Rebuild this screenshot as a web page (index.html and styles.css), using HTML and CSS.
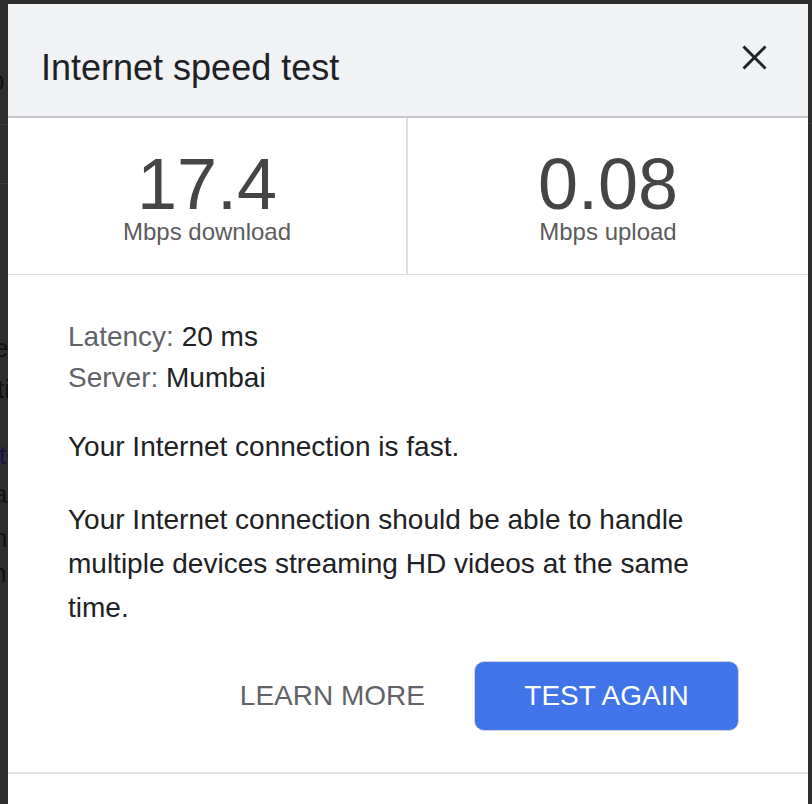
FILE: index.html
```html
<!DOCTYPE html>
<html lang="en">
<head>
<meta charset="utf-8">
<title>Internet speed test</title>
<link rel="stylesheet" href="styles.css">
</head>
<body>
<div class="screen">
  <div class="backdrop">
    <div class="bg-line bg-p">p</div>
    <div class="bg-rule bg-rule-1"></div>
    <div class="bg-rule bg-rule-2"></div>
    <div class="bg-line bg-e">ed</div>
    <div class="bg-line bg-ti">tion</div>
    <div class="bg-line bg-t link">test</div>
    <div class="bg-line bg-a">an</div>
    <div class="bg-line bg-n1">nd</div>
    <div class="bg-line bg-n2">ni</div>
  </div>

  <div class="dialog">
    <div class="header">
      <h1 class="title">Internet speed test</h1>
      <svg class="close" viewBox="0 0 27 27" aria-label="Close">
        <path d="M2.5 2.5 L24.5 24.5 M24.5 2.5 L2.5 24.5" stroke="#202124" stroke-width="3" fill="none"/>
      </svg>
    </div>

    <div class="stats">
      <div class="stat stat-left">
        <div class="num">17.4</div>
        <div class="unit">Mbps download</div>
      </div>
      <div class="stat">
        <div class="num">0.08</div>
        <div class="unit">Mbps upload</div>
      </div>
    </div>

    <div class="content">
      <div class="meta">
        <div class="meta-row"><span class="label">Latency:</span> 20 ms</div>
        <div class="meta-row"><span class="label">Server:</span> Mumbai</div>
      </div>
      <p class="para para-first">Your Internet connection is fast.</p>
      <p class="para para-second">Your Internet connection should be able to handle multiple devices streaming HD videos at the same time.</p>
      <div class="actions">
        <button class="btn btn-text">LEARN MORE</button>
        <button class="btn btn-primary">TEST AGAIN</button>
      </div>
    </div>

    <div class="footer"></div>
  </div>

  <div class="backdrop-right">
    <div class="bg-rule bg-rule-r"></div>
  </div>
</div>
</body>
</html>
```

FILE: styles.css
```css
html, body {
  margin: 0;
  padding: 0;
}

body {
  background: #2e2e2e;
  overflow: hidden;
  font-family: "Liberation Sans", Arial, sans-serif;
}

.screen {
  display: flex;
  width: 812px;
  height: 804px;
  overflow: hidden;
}

/* dimmed page behind the dialog */
.backdrop {
  width: 8px;
  flex: none;
  overflow: hidden;
  display: flex;
  flex-direction: column;
  white-space: nowrap;
  color: #111111;
  font-size: 26px;
  line-height: 26px;
}

.backdrop-right {
  width: 4px;
  flex: none;
  display: flex;
  flex-direction: column;
}

.bg-line {
  height: 26px;
}

.bg-rule {
  height: 1px;
  background: #3c3c3c;
  flex: none;
}

.bg-p { margin-top: 68px; margin-left: -11px; font-size: 28px; }
.bg-rule-1 { margin-top: 30px; }
.bg-rule-2 { margin-top: 58px; }
.bg-e { margin-top: 151px; margin-left: -6px; }
.bg-ti { margin-top: 15px; margin-left: -3px; }
.bg-t { margin-top: 40px; margin-left: -1px; }
.bg-a { margin-top: 13px; margin-left: -7px; }
.bg-n1 { margin-top: 18px; margin-left: -7px; }
.bg-n2 { margin-top: 9px; margin-left: -8px; }
.bg-rule-r { margin-top: 123px; }

.link {
  color: #16124e;
}

/* dialog */
.dialog {
  width: 800px;
  height: 800px;
  margin-top: 4px;
  flex: none;
  background: #ffffff;
  display: flex;
  flex-direction: column;
}

.header {
  height: 112px;
  flex: none;
  background: #f1f2f4;
  border-bottom: 2px solid #c6c7cb;
  display: flex;
  justify-content: space-between;
  align-items: flex-start;
  padding: 0 40px 0 33px;
}

.title {
  margin: 46px 0 0;
  font-size: 36px;
  line-height: 36px;
  font-weight: normal;
  color: #202124;
}

.close {
  width: 27px;
  height: 27px;
  margin-top: 40px;
  flex: none;
}

.stats {
  display: grid;
  grid-template-columns: 1fr 1fr;
  height: 156px;
  flex: none;
  border-bottom: 1px solid #dadce0;
}

.stat {
  text-align: center;
  padding-top: 30px;
}

.stat-left {
  border-right: 2px solid #dfe0e4;
}

.num {
  font-size: 72px;
  line-height: 72px;
  color: #454545;
}

.unit {
  font-size: 24px;
  line-height: 24px;
  color: #5c5c5c;
}

.content {
  padding: 41px 69px 0 60px;
  flex: none;
}

.meta-row {
  font-size: 28px;
  line-height: 41px;
  color: #202124;
}

.label {
  color: #5f6368;
}

.para {
  margin: 0;
  font-size: 28px;
  line-height: 44px;
  color: #202124;
}

.para-first {
  margin-top: 27px;
}

.para-second {
  margin-top: 29px;
}

.actions {
  display: flex;
  justify-content: flex-end;
  align-items: center;
  margin-top: 31px;
}

.btn {
  font-family: "Liberation Sans", Arial, sans-serif;
  font-size: 28px;
  height: 70px;
  box-sizing: border-box;
  border-radius: 10px;
  cursor: pointer;
}

.btn-text {
  background: transparent;
  border: 1.5px solid transparent;
  color: #5f6368;
  padding: 0 48px;
}

.btn-primary {
  width: 265px;
  background: #4274e9;
  border: 1.5px solid #d3d6dc;
  color: #ffffff;
  padding: 0;
}

.footer {
  margin-top: 41px;
  border-top: 2px solid #e0e1e4;
  flex: 1;
}
```
